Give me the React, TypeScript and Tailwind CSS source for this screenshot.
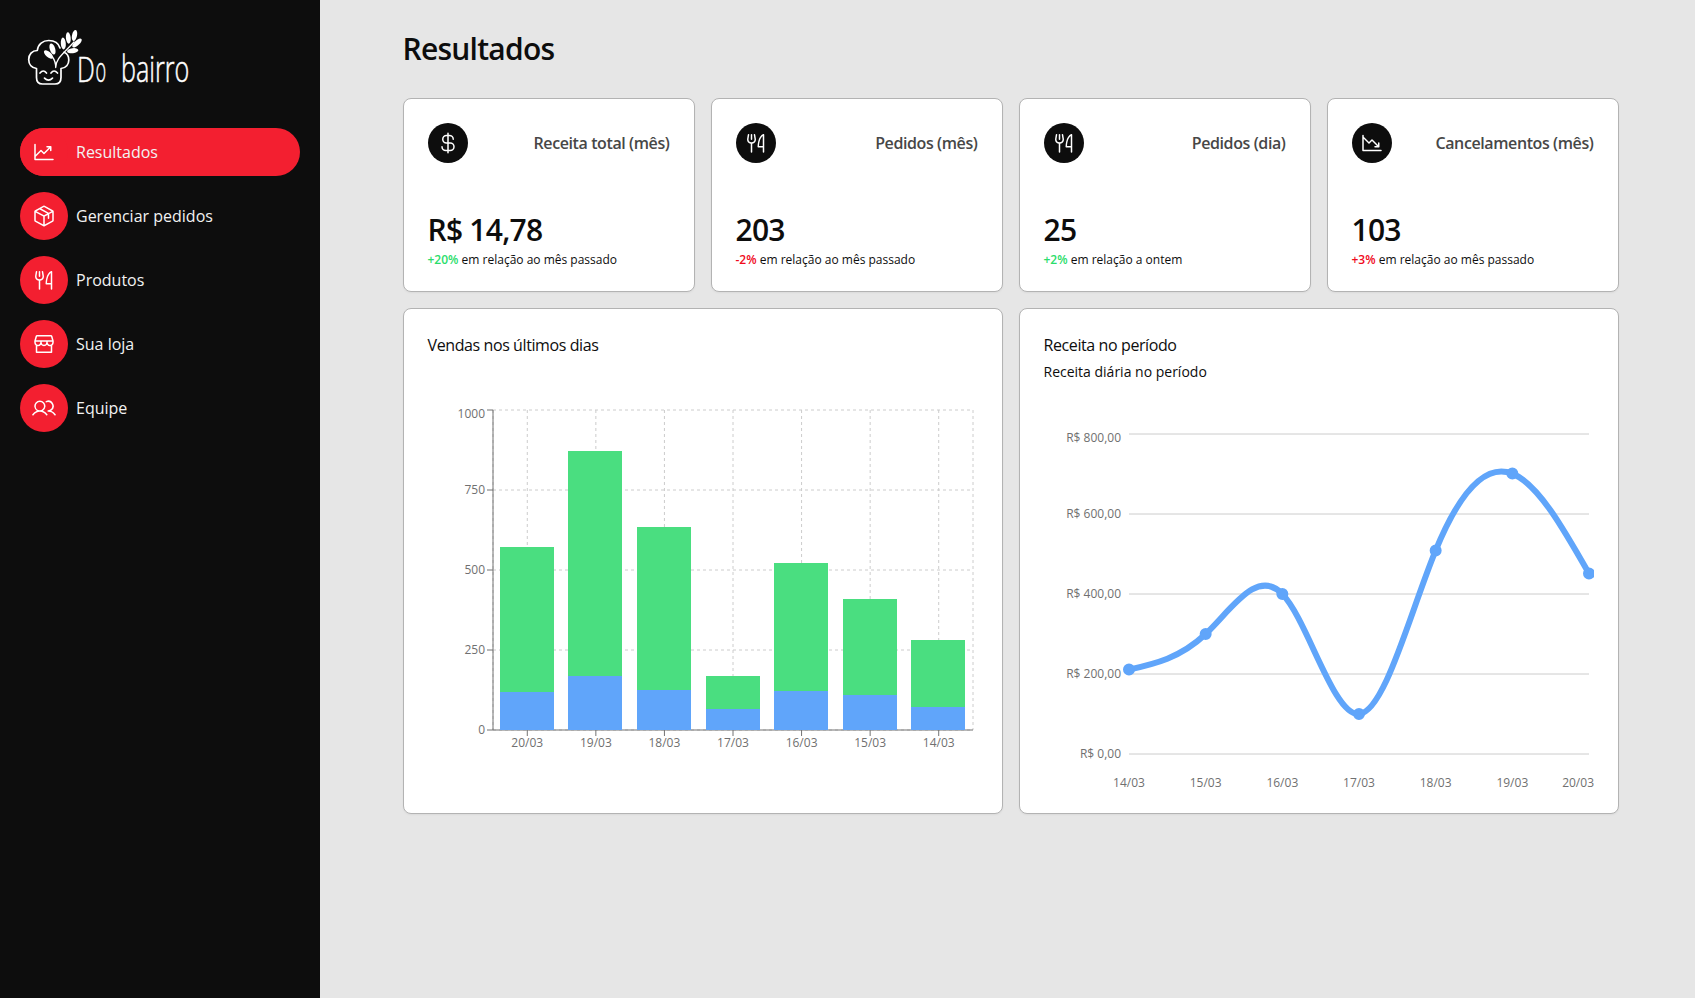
import { PiChartLineUp, PiChartLineDown, PiCurrencyDollar, PiForkKnife, PiPackage, PiStorefront, PiUsers } from "react-icons/pi";
import type { IconType } from "react-icons";

const nav: { label: string; Icon: IconType; active?: boolean }[] = [
  { label: "Resultados", Icon: PiChartLineUp, active: true },
  { label: "Gerenciar pedidos", Icon: PiPackage },
  { label: "Produtos", Icon: PiForkKnife },
  { label: "Sua loja", Icon: PiStorefront },
  { label: "Equipe", Icon: PiUsers },
];

const metrics: { title: string; Icon: IconType; value: string; diff: string; good: boolean; note: string }[] = [
  { title: "Receita total (mês)", Icon: PiCurrencyDollar, value: "R$ 14,78", diff: "+20%", good: true, note: "em relação ao mês passado" },
  { title: "Pedidos (mês)", Icon: PiForkKnife, value: "203", diff: "-2%", good: false, note: "em relação ao mês passado" },
  { title: "Pedidos (dia)", Icon: PiForkKnife, value: "25", diff: "+2%", good: true, note: "em relação a ontem" },
  { title: "Cancelamentos (mês)", Icon: PiChartLineDown, value: "103", diff: "+3%", good: false, note: "em relação ao mês passado" },
];

const sales = [
  { date: "20/03", low: 120, total: 572 },
  { date: "19/03", low: 169, total: 872 },
  { date: "18/03", low: 125, total: 634 },
  { date: "17/03", low: 66, total: 169 },
  { date: "16/03", low: 122, total: 522 },
  { date: "15/03", low: 109, total: 409 },
  { date: "14/03", low: 72, total: 281 },
];

const revenue = [
  { date: "14/03", value: 211 },
  { date: "15/03", value: 300 },
  { date: "16/03", value: 400 },
  { date: "17/03", value: 100 },
  { date: "18/03", value: 509 },
  { date: "19/03", value: 701 },
  { date: "20/03", value: 451 },
];

function Logo() {
  return (
    <svg width="180" height="64" viewBox="0 0 180 64" fill="none" className="block">
      <g stroke="#fff" strokeWidth="1.7" strokeLinecap="round" strokeLinejoin="round">
        <path d="M36 18C34.500 13 30 10.500 24.700 10.500C19 10.500 14 14 13.300 20.500C8 20.500 4.700 24.500 4.700 29.600C4.700 34.500 7.800 38 12.500 38.500V47.500Q12.500 54 18.500 54H31Q37 54 37 47.500V38.500C42 38 44.800 34.500 44.800 30C44.800 26.500 43 23.500 40 22.300" />
        <path d="M16 43Q19.300 39 22.500 43M27 43Q30 39 33.500 43M20.500 48.200Q24.500 52 28.500 48.200" />
        <path d="M31.700 37.500Q31.700 31.500 28.500 27M31.700 37.500C31.700 29 38 25 50 12" strokeWidth="1.3" />
      </g>
      <g fill="#fff">
        <ellipse cx="28.500" cy="19" rx="2.700" ry="5.700" transform="rotate(-18 28.500 19)" />
        <ellipse cx="24.500" cy="24.500" rx="2.600" ry="5.700" transform="rotate(-48 24.500 24.500)" />
        <ellipse cx="39.300" cy="13.500" rx="2.500" ry="6" transform="rotate(-4 39.300 13.500)" />
        <ellipse cx="44.300" cy="8" rx="2.400" ry="5.700" transform="rotate(-6 44.300 8)" />
        <ellipse cx="50.500" cy="5.500" rx="2.500" ry="5.500" transform="rotate(12 50.500 5.500)" />
        <ellipse cx="53" cy="13" rx="2.500" ry="6" transform="rotate(48 53 13)" />
        <ellipse cx="48.700" cy="20.700" rx="2.500" ry="5.700" transform="rotate(82 48.700 20.700)" />
      </g>
      <g fill="#fff" stroke="#fff" strokeWidth="0.5" className="font-['Open_Sans','Noto_Sans',sans-serif] font-light">
        <text transform="translate(53 52) scale(0.72 1)" fontSize="35">D</text>
        <text transform="translate(71.500 52) scale(0.55 1.050)" fontSize="33">o</text>
        <text transform="translate(97 52) scale(0.74 1.080)" fontSize="34">bairro</text>
      </g>
    </svg>
  );
}

function BarChart() {
  const band = 480 / 7;
  const y = (v: number) => 325 - (v / 1000) * 320;
  return (
    <svg width="550" height="360" className="block text-xs">
      <g stroke="#ccc" strokeDasharray="3 3">
        {[0, 250, 500, 750, 1000].map((v) => <line key={v} x1="65" x2="545" y1={y(v)} y2={y(v)} />)}
        {sales.map((d, i) => <line key={d.date} x1={65 + band * (i + 0.5)} x2={65 + band * (i + 0.5)} y1="5" y2="325" />)}
        <line x1="65" x2="65" y1="5" y2="325" />
        <line x1="545" x2="545" y1="5" y2="325" />
      </g>
      <g stroke="#737373">
        <line x1="65" x2="545" y1="325" y2="325" />
        <line x1="65" x2="65" y1="5" y2="325" />
        {sales.map((d, i) => <line key={d.date} x1={65 + band * (i + 0.5)} x2={65 + band * (i + 0.5)} y1="325" y2="331" />)}
        {[0, 250, 500, 750, 1000].map((v) => <line key={v} x1="59" x2="65" y1={y(v)} y2={y(v)} />)}
      </g>
      <g fill="#707070">
        {sales.map((d, i) => <text key={d.date} x={65 + band * (i + 0.5)} y="342" textAnchor="middle">{d.date}</text>)}
        {[0, 250, 500, 750, 1000].map((v) => <text key={v} x="57" y={Math.max(y(v), 9) + 4} textAnchor="end">{v}</text>)}
      </g>
      {sales.map((d, i) => (
        <g key={d.date} shapeRendering="crispEdges">
          <rect x={71.857 + band * i} width="54" y={y(d.low)} height={325 - y(d.low)} fill="#60a5fa" />
          <rect x={71.857 + band * i} width="54" y={y(d.total)} height={y(d.low) - y(d.total)} fill="#4ade80" />
        </g>
      ))}
    </svg>
  );
}

/* Natural cubic spline through evenly spaced points. */
function naturalPath(points: [number, number][]) {
  const n = points.length;
  const ys = points.map((p) => p[1]);
  const c: number[] = [];
  const d: number[] = [];
  for (let i = 0; i < n; i++) {
    const a = i === 0 ? 0 : 1;
    const b = i === 0 || i === n - 1 ? 2 : 4;
    const r = 3 * (ys[Math.min(i + 1, n - 1)] - ys[Math.max(i - 1, 0)]);
    const m = b - a * (i ? c[i - 1] : 0);
    c.push(1 / m);
    d.push((r - a * (i ? d[i - 1] : 0)) / m);
  }
  const s = [...d];
  for (let i = n - 2; i >= 0; i--) s[i] = d[i] - c[i] * s[i + 1];
  let path = `M${points[0][0]},${points[0][1]}`;
  for (let i = 0; i < n - 1; i++) {
    const [x0, y0] = points[i];
    const [x1, y1] = points[i + 1];
    const h = (x1 - x0) / 3;
    path += `C${x0 + h},${y0 + s[i] / 3} ${x1 - h},${y1 - s[i + 1] / 3} ${x1},${y1}`;
  }
  return path;
}

function LineChart() {
  const y = (v: number) => 325 - (v / 800) * 320;
  const points = revenue.map((d, i): [number, number] => [85 + (460 / 6) * i, y(d.value)]);
  return (
    <svg width="550" height="360" className="block overflow-hidden text-xs">
      <g stroke="#ccc">
        {[0, 200, 400, 600, 800].map((v) => <line key={v} x1="85" x2="545" y1={y(v)} y2={y(v)} />)}
      </g>
      <path d={naturalPath(points)} fill="none" stroke="#60a5fa" strokeWidth="6" />
      {points.map(([px, py]) => <circle key={px} cx={px} cy={py} r="3" fill="#60a5fa" stroke="#60a5fa" strokeWidth="6" />)}
      <g fill="#707070">
        {revenue.map((d, i) => (
          <text key={d.date} x={i === 6 ? 550 : points[i][0]} y="357.500" textAnchor={i === 6 ? "end" : "middle"}>{d.date}</text>
        ))}
        {[0, 200, 400, 600, 800].map((v) => <text key={v} x="77" y={Math.max(y(v), 9) + 4} textAnchor="end">{`R$ ${v},00`}</text>)}
      </g>
    </svg>
  );
}

const card = "rounded-lg border border-[#b3b3b3] bg-white shadow-xs";

export default function App() {
  return (
    <div className="flex h-[998px] overflow-hidden bg-[#e6e6e6] font-['Open_Sans','Noto_Sans',sans-serif] text-[#0d0d0d]">
      <aside className="w-80 shrink-0 bg-[#0d0d0d] px-5 pt-[30px]">
        <div className="h-[98px] pl-1"><Logo /></div>
        <nav className="flex flex-col gap-4">
          {nav.map(({ label, Icon, active }) => (
            <a key={label} className={active ? "flex h-12 items-center gap-2 rounded-full bg-[#f31f30] text-[#f2f2f2]" : "flex h-12 items-center gap-2 text-[#f2f2f2]"}>
              <span className="flex size-12 items-center justify-center rounded-full bg-[#f31f30] text-white"><Icon size={24} /></span>
              <span>{label}</span>
            </a>
          ))}
        </nav>
      </aside>
      <main className="w-[1298.5px] shrink-0 pl-[82.5px] pt-[29px]">
        <h1 className="mb-[29px] text-3xl leading-10 font-semibold tracking-tight">Resultados</h1>
        <div className="grid grid-cols-4 gap-4">
          {metrics.map(({ title, Icon, value, diff, good, note }) => (
            <section key={title} className={`${card} flex h-[194px] flex-col justify-between px-6 pt-6 pb-[21px]`}>
              <div className="flex items-center justify-between">
                <span className="flex size-10 items-center justify-center rounded-full bg-[#0d0d0d] text-white"><Icon size={24} /></span>
                <h2 className="font-semibold tracking-tight text-[#474747]">{title}</h2>
              </div>
              <div>
                <p className="mb-0.5 text-3xl leading-9 font-semibold tracking-tight">{value}</p>
                <p className="text-xs leading-5"><span className={good ? "font-semibold text-[#2bdd6b]" : "font-semibold text-[#f00a1c]"}>{diff}</span> {note}</p>
              </div>
            </section>
          ))}
        </div>
        <div className="mt-4 grid grid-cols-2 gap-4">
          <section className={`${card} h-[506px] p-6`}>
            <div className="h-[72px]"><h2 className="tracking-tight">Vendas nos últimos dias</h2></div>
            <BarChart />
          </section>
          <section className={`${card} h-[506px] p-6`}>
            <div className="h-24">
              <h2 className="tracking-tight">Receita no período</h2>
              <p className="mt-[5px] text-sm">Receita diária no período</p>
            </div>
            <LineChart />
          </section>
        </div>
      </main>
    </div>
  );
}
